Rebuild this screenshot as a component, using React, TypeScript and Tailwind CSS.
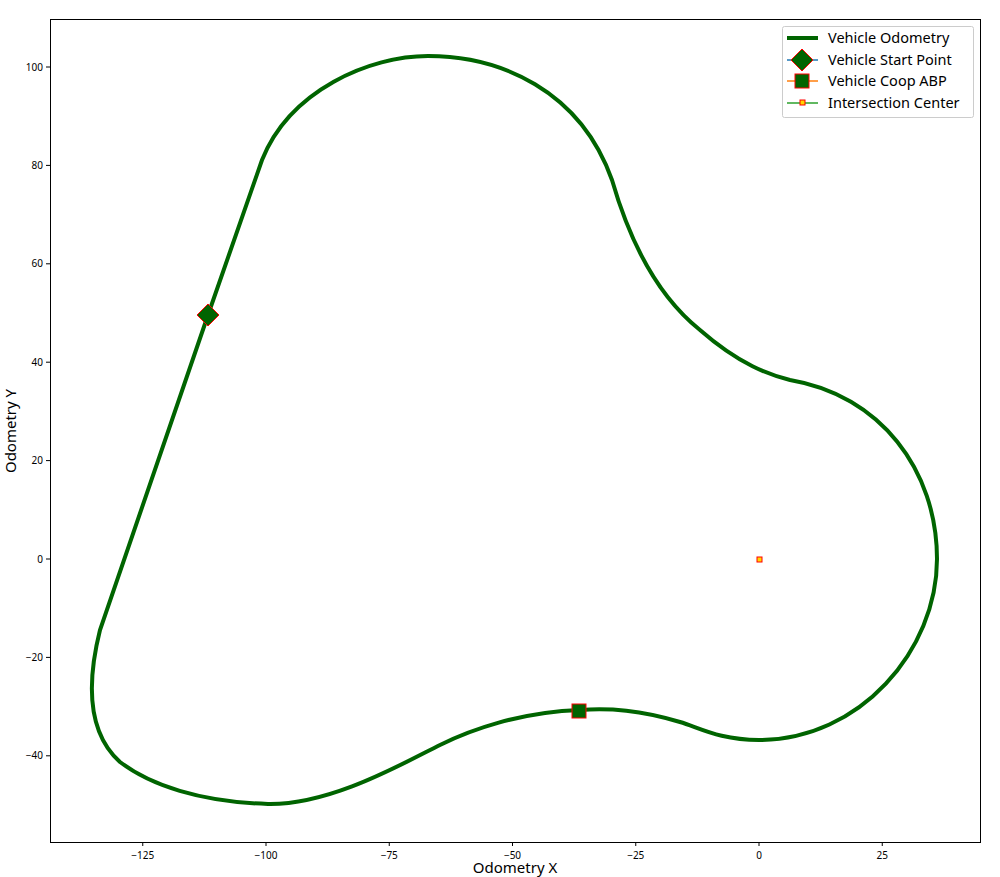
export default function App() {
  const xt = [-125, -100, -75, -50, -25, 0, 25];
  const yt = [-40, -20, 0, 20, 40, 60, 80, 100];
  const X = (v: number) => 759 + 4.93 * v;
  const Y = (v: number) => 559 - 4.92 * v;
  const lab = (v: number) => (v < 0 ? "\u2212" + Math.abs(v) : String(v));
  const g = "#006400";
  return (
    <div className="w-[1000px] h-[877px] bg-white font-['DejaVu_Sans',sans-serif]">
      <svg width="1000" height="877">
        <path
          d="M208,315 L262,160 C290,90 370,56 428,56 C500,56 580,90 612,180 C625,225 650,290 700,330 C740,365 770,375 790,380 C880,395 937,470 937,559 C937,650 860,740 759,740 C720,740 700,728 680,722 C640,710 610,708 580,710 C520,712 470,730 440,745 C400,765 330,805 268,804 C200,802 150,785 120,762 C90,735 85,690 100,630 L208,315 Z"
          fill="none" stroke={g} strokeWidth="4" />
        <polygon points="208,304 219,315 208,326 197,315" fill={g} stroke="red" strokeWidth="1" />
        <rect x="572" y="704" width="14" height="14" fill={g} stroke="red" strokeWidth="1" />
        <rect x="757" y="557" width="5" height="5" fill="#ffd700" stroke="red" strokeWidth="1" />
        <rect x="50.5" y="19.5" width="930" height="823" fill="none" stroke="#000" strokeWidth="1" />
        {xt.map((v) => (
          <g key={v}>
            <line x1={X(v)} x2={X(v)} y1="842" y2="846" stroke="#000" />
            <text x={X(v)} y="859" fontSize="10" textAnchor="middle">{lab(v)}</text>
          </g>
        ))}
        {yt.map((v) => (
          <g key={v}>
            <line x1="46" x2="50" y1={Y(v)} y2={Y(v)} stroke="#000" />
            <text x="43" y={Y(v) + 3.5} fontSize="10" textAnchor="end">{lab(v)}</text>
          </g>
        ))}
        <text x="515" y="873" fontSize="15" textAnchor="middle">Odometry X</text>
        <text x="16" y="431" fontSize="15" textAnchor="middle" transform="rotate(-90 16 431)">Odometry Y</text>
        <rect x="782.5" y="26.5" width="191" height="91" rx="2" fill="white" stroke="#ccc" />
        <line x1="787" x2="818" y1="38" y2="38" stroke={g} strokeWidth="4" />
        <line x1="787" x2="818" y1="60" y2="60" stroke="#1f77b4" strokeWidth="1.5" />
        <polygon points="802,49 813,60 802,71 791,60" fill={g} stroke="red" />
        <line x1="787" x2="818" y1="81" y2="81" stroke="#ff7f0e" strokeWidth="1.5" />
        <rect x="795" y="74" width="14" height="14" fill={g} stroke="red" />
        <line x1="787" x2="818" y1="103" y2="103" stroke="#2ca02c" strokeWidth="1.5" />
        <rect x="800" y="100" width="5" height="5" fill="#ffd700" stroke="red" />
        <text x="828" y="43" fontSize="14.5">Vehicle Odometry</text>
        <text x="828" y="65" fontSize="14.5">Vehicle Start Point</text>
        <text x="828" y="86" fontSize="14.5">Vehicle Coop ABP</text>
        <text x="828" y="108" fontSize="14.5">Intersection Center</text>
      </svg>
    </div>
  );
}
